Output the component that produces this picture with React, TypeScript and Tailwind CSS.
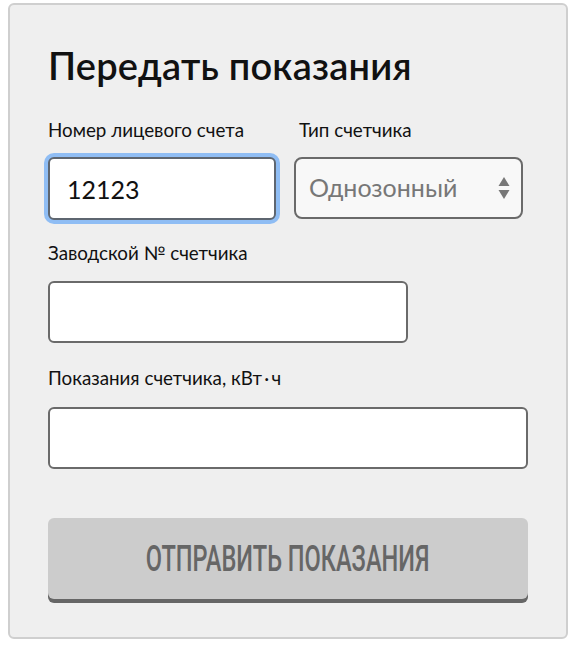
import React from "react";

export default function App() {
  return (
    <div className="w-[578px] h-[648px] bg-white pt-[3px] pl-[8px]" style={{ fontFamily: "Lato, 'Noto Sans', sans-serif" }}>
      <div className="w-[560px] h-[636px] bg-[#efefef] border-2 border-[#cfcfcf] rounded-[6px] px-[38px] pt-[38px]">
        <h1 className="text-[38px] leading-[44px] font-semibold text-[#111] tracking-[0.2px]">Передать показания</h1>
        <div className="flex mt-[32px] gap-[18px]">
          <div className="flex flex-col">
            <label className="text-[18.8px] leading-[22px] text-[#111]">Номер лицевого счета</label>
            <input
              defaultValue="12123"
              className="mt-[16px] w-[228px] h-[63px] bg-white border-2 border-[#5e6670] rounded-[6px] px-[17px] text-[25px] text-[#111] outline-none shadow-[0_0_0_4px_#8fbdf4]"
              style={{ fontFamily: "Lato, sans-serif" }}
            />
          </div>
          <div className="flex flex-col">
            <label className="pl-[5px] text-[18.8px] leading-[22px] text-[#111]">Тип счетчика</label>
            <div className="relative mt-[16px] w-[229px] h-[62px] bg-[#f8f8f8] border-2 border-[#6a6a6a] rounded-[8px] flex items-center px-[13px]">
              <span className="text-[25px] text-[#777]">Однозонный</span>
              <svg className="absolute right-[11px] top-[17px]" width="12" height="26" viewBox="0 0 12 26">
                <polygon points="6,1 11.5,10 0.5,10" fill="#777" />
                <polygon points="6,23 11.5,14 0.5,14" fill="#777" />
              </svg>
            </div>
          </div>
        </div>
        <label className="block mt-[22px] text-[18.8px] leading-[22px] text-[#111]">Заводской № счетчика</label>
        <input className="block mt-[17px] w-[360px] h-[62px] bg-white border-2 border-[#6a6a6a] rounded-[6px] outline-none" />
        <label className="block mt-[24px] text-[18.8px] leading-[22px] text-[#111]">Показания счетчика, кВт{"\u2009·\u2009"}ч</label>
        <input className="block mt-[18px] w-[480px] h-[62px] bg-white border-2 border-[#6a6a6a] rounded-[6px] outline-none" />
        <button className="mt-[49px] w-[480px] h-[81px] bg-[#cccccc] rounded-[6px] shadow-[0_4px_0_#666] flex items-center justify-center">
          <span
            className="inline-block text-[36px] font-medium text-[#666] uppercase scale-x-[0.655] whitespace-nowrap"
            style={{ fontFamily: "Roboto, sans-serif" }}
          >
            Отправить показания
          </span>
        </button>
      </div>
    </div>
  );
}
